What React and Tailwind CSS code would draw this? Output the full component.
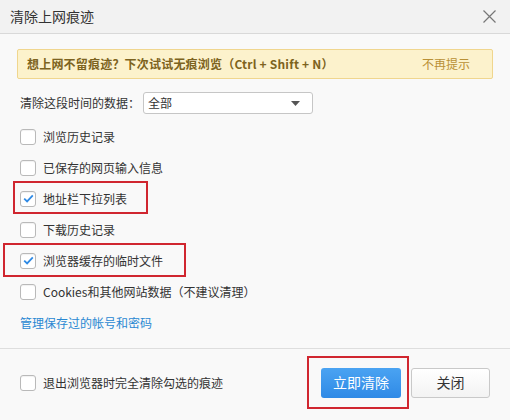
import React from "react";

const font = { fontFamily: '"Noto Sans CJK SC", "Noto Sans", sans-serif' };

function Box({ checked }) {
  return (
    <span className="flex h-[16px] w-[16px] shrink-0 items-center justify-center rounded-[3px] border border-[#b9b9b9] bg-white shadow-[inset_0_1px_1px_rgba(0,0,0,0.06)]">
      {checked && (
        <svg width="11" height="9" viewBox="0 0 11 9">
          <path d="M1.2 4.6 L4.1 7.4 L9.8 1.4" fill="none" stroke="#2f8ae5" strokeWidth="1.8" />
        </svg>
      )}
    </span>
  );
}

function Row({ checked, children }) {
  return (
    <div className="flex h-[31px] items-center gap-[7px] pl-[20px]">
      <Box checked={checked} />
      <span className="text-[12px] text-[#333]">{children}</span>
    </div>
  );
}

export default function App() {
  return (
    <div className="relative h-[420px] w-[510px] overflow-hidden bg-[#f9f9f9]" style={font}>
      <div className="flex h-[34px] items-center justify-between border-b border-[#d9d9d9] bg-[#f2f2f2] pl-[10px] pr-[14px]">
        <span className="text-[14px] text-[#333]">清除上网痕迹</span>
        <svg width="13" height="13" viewBox="0 0 13 13">
          <path d="M0.5 0.5 L12.5 12.5 M12.5 0.5 L0.5 12.5" stroke="#777" strokeWidth="1.2" />
        </svg>
      </div>

      <div className="mx-[17px] mt-[15px] flex h-[30px] items-center justify-between rounded-[2px] border border-[#f0d68e] bg-[#fcf2cc] pl-[9px] pr-[22px]">
        <span className="text-[12px] font-bold tracking-[0.2px] text-[#7d6320]">想上网不留痕迹？下次试试无痕浏览（Ctrl + Shift + N）</span>
        <span className="text-[12px] text-[#b99035]">不再提示</span>
      </div>

      <div className="mt-[13px] flex h-[22px] items-center pl-[20px]">
        <span className="text-[12px] text-[#333]">清除这段时间的数据：</span>
        <div className="ml-[3px] flex h-[22px] w-[170px] items-center justify-between rounded-[3px] border border-[#c6c6c6] bg-white pl-[4px] pr-[12px]">
          <span className="text-[12px] text-[#333]">全部</span>
          <svg width="9" height="5" viewBox="0 0 9 5">
            <path d="M0 0 H9 L4.5 5 Z" fill="#555" />
          </svg>
        </div>
      </div>

      <div className="mt-[7px]">
        <Row>浏览历史记录</Row>
        <Row>已保存的网页输入信息</Row>
        <Row checked>地址栏下拉列表</Row>
        <Row>下载历史记录</Row>
        <Row checked>浏览器缓存的临时文件</Row>
        <Row>Cookies和其他网站数据（不建议清理）</Row>
        <div className="flex h-[31px] items-center pl-[20px]">
          <span className="text-[12px] text-[#2a88d2]">管理保存过的帐号和密码</span>
        </div>
      </div>

      <div className="mt-[10px] flex h-[71px] items-center justify-between border-t border-[#dedede] pb-[3px] pl-[20px] pr-[20px]">
        <div className="flex items-center gap-[7px]">
          <Box />
          <span className="text-[12px] text-[#333]">退出浏览器时完全清除勾选的痕迹</span>
        </div>
        <div className="flex items-center gap-[10px]">
          <button className="h-[30px] w-[80px] rounded-[3px] bg-gradient-to-b from-[#4aa3f2] to-[#2f8ae6] text-[14px] text-white">立即清除</button>
          <button className="h-[30px] w-[79px] rounded-[3px] border border-[#c9c9c9] bg-gradient-to-b from-[#ffffff] to-[#f3f3f3] text-[14px] text-[#333]">关闭</button>
        </div>
      </div>

      <div className="pointer-events-none absolute left-[13px] top-[181px] h-[33px] w-[135px] border-2 border-[#d0262f]" />
      <div className="pointer-events-none absolute left-[3px] top-[243px] h-[34px] w-[183px] border-2 border-[#d0262f]" />
      <div className="pointer-events-none absolute left-[307px] top-[356px] h-[53px] w-[102px] border-2 border-[#d0262f]" />
    </div>
  );
}
